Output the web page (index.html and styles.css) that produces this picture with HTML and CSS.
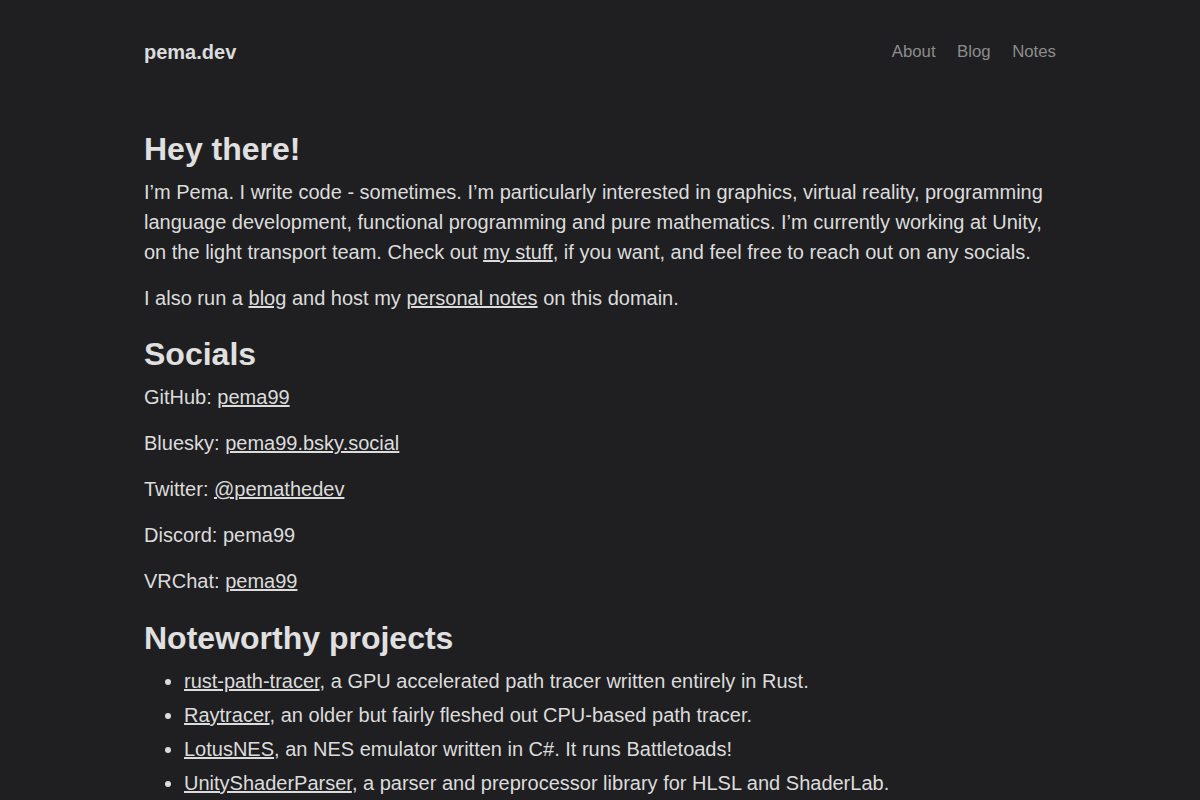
FILE: index.html
```html
<!DOCTYPE html>
<html lang="en">
<head>
<meta charset="utf-8">
<title>pema.dev</title>
<link rel="stylesheet" href="styles.css">
</head>
<body>
<div class="page">
  <header class="site-header">
    <a class="brand" href="#">pema.dev</a>
    <nav class="nav">
      <a href="#">About</a>
      <a href="#">Blog</a>
      <a href="#">Notes</a>
    </nav>
  </header>
  <main class="content">
    <h2>Hey there!</h2>
    <p>I’m Pema. I write code - sometimes. I’m particularly interested in graphics, virtual reality, programming language development, functional programming and pure mathematics. I’m currently working at Unity, on the light transport team. Check out <a href="#">my stuff</a>, if you want, and feel free to reach out on any socials.</p>
    <p>I also run a <a href="#">blog</a> and host my <a href="#">personal notes</a> on this domain.</p>
    <h2>Socials</h2>
    <p>GitHub: <a href="#">pema99</a></p>
    <p>Bluesky: <a href="#">pema99.bsky.social</a></p>
    <p>Twitter: <a href="#">@pemathedev</a></p>
    <p>Discord: pema99</p>
    <p>VRChat: <a href="#">pema99</a></p>
    <h2>Noteworthy projects</h2>
    <ul class="projects">
      <li><a href="#">rust-path-tracer</a>, a GPU accelerated path tracer written entirely in Rust.</li>
      <li><a href="#">Raytracer</a>, an older but fairly fleshed out CPU-based path tracer.</li>
      <li><a href="#">LotusNES</a>, an NES emulator written in C#. It runs Battletoads!</li>
      <li><a href="#">UnityShaderParser</a>, a parser and preprocessor library for HLSL and ShaderLab.</li>
      <li><a href="#">ShaderLab VS Code</a>, syntax highlighting for ShaderLab in Visual Studio Code.</li>
    </ul>
  </main>
</div>
</body>
</html>
```
FILE: styles.css
```css
html, body {
  margin: 0;
  padding: 0;
  background: #1f1f21;
}
body {
  color: #dcdcdc;
  font-family: "Liberation Sans", Arial, sans-serif;
  font-size: 20px;
  line-height: 30px;
}
.page {
  width: 912px;
  margin: 0 auto;
}
.site-header {
  display: flex;
  justify-content: space-between;
  align-items: center;
  height: 104px;
}
.brand {
  color: #dcdcdc;
  font-weight: bold;
  font-size: 20px;
  text-decoration: none;
}
.nav {
  display: flex;
  gap: 21.5px;
  font-size: 16.8px;
}
.nav a {
  color: #8c8c8c;
  text-decoration: none;
}
.content {
  padding-top: 4px;
}
h2 {
  font-size: 32px;
  line-height: 40px;
  margin: 21.44px 0 8px;
  color: #e0e0e0;
}
.content > h2:first-child {
  margin-top: 21px;
}
p {
  margin: 0 0 16px;
}
a {
  color: #dcdcdc;
  text-decoration: underline;
}
.projects {
  margin: 0;
  padding-left: 40px;
}
.projects li {
  margin-bottom: 4px;
}
```
